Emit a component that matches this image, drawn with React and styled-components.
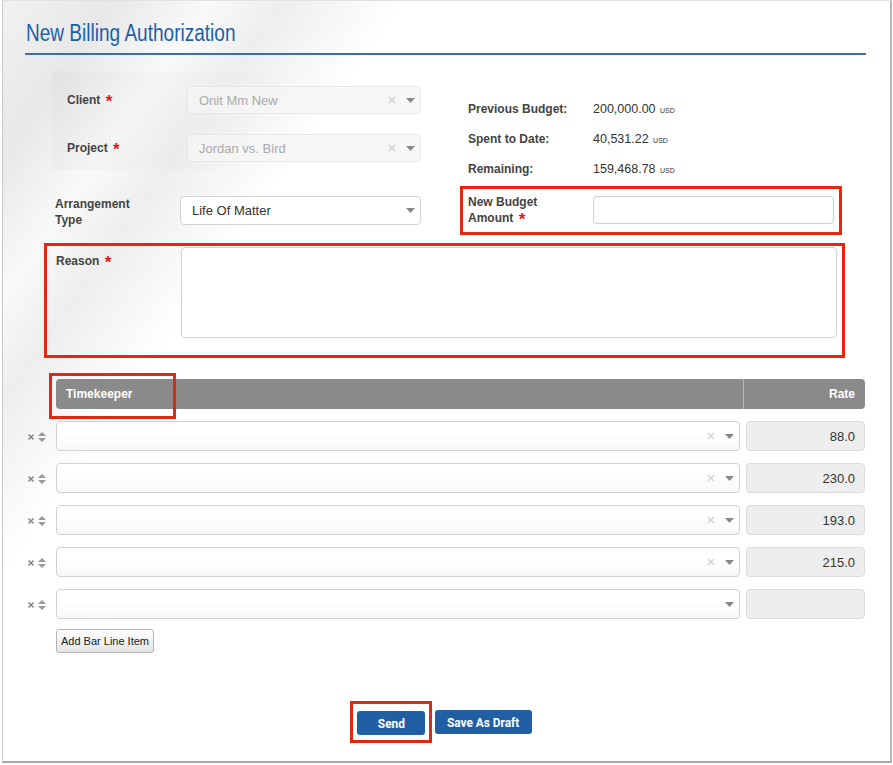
import React from "react";
import styled, { createGlobalStyle } from "styled-components";

const GlobalStyle = createGlobalStyle`
  html, body {
    margin: 0;
    padding: 0;
    background: #fff;
    font-family: "Liberation Sans", Arial, sans-serif;
  }
`;

const budgetInfo = [
  { label: "Previous Budget:", value: "200,000.00" },
  { label: "Spent to Date:", value: "40,531.22" },
  { label: "Remaining:", value: "159,468.78" },
];

const timekeepers = [
  { rate: "88.0", clearable: true },
  { rate: "230.0", clearable: true },
  { rate: "193.0", clearable: true },
  { rate: "215.0", clearable: true },
  { rate: "", clearable: false },
];

const Caret = () => (
  <svg width="9" height="5" viewBox="0 0 9 5">
    <path d="M0 0 L9 0 L4.5 5 Z" fill="#888" />
  </svg>
);

const Clear = () => (
  <svg width="8" height="8" viewBox="0 0 8 8">
    <path d="M1 1 L7 7 M7 1 L1 7" stroke="#d0d0d0" strokeWidth="1.3" />
  </svg>
);

const RowTools = () => (
  <svg width="22" height="12" viewBox="0 0 22 12">
    <path d="M1.5 3.5 L6.5 8.5 M6.5 3.5 L1.5 8.5" stroke="#888" strokeWidth="1.6" />
    <path d="M11 5 L15 1 L19 5 Z" fill="#999" />
    <path d="M11 7 L15 11 L19 7 Z" fill="#999" />
  </svg>
);

export default function App() {
  return (
    <>
      <GlobalStyle />
      <Frame>
        <TitleBar>
          <TitleText>New Billing Authorization</TitleText>
        </TitleBar>

        <TopGrid>
          <div>
            <ShadedPanel>
              <FieldRow>
                <Label width="120px">
                  Client <Req>*</Req>
                </Label>
                <Select disabled>
                  <span>Onit Mm New</span>
                  <SelectIcons>
                    <Clear />
                    <Caret />
                  </SelectIcons>
                </Select>
              </FieldRow>
              <FieldRow>
                <Label width="120px">
                  Project <Req>*</Req>
                </Label>
                <Select disabled>
                  <span>Jordan vs. Bird</span>
                  <SelectIcons>
                    <Clear />
                    <Caret />
                  </SelectIcons>
                </Select>
              </FieldRow>
            </ShadedPanel>
            <ArrangementRow>
              <Label width="125px">
                Arrangement
                <br />
                Type
              </Label>
              <Select tall>
                <span>Life Of Matter</span>
                <SelectIcons>
                  <Caret />
                </SelectIcons>
              </Select>
            </ArrangementRow>
          </div>

          <RightCol>
            {budgetInfo.map((b) => (
              <InfoRow key={b.label}>
                <Label width="125px">{b.label}</Label>
                <Amount>
                  {b.value} <Currency>USD</Currency>
                </Amount>
              </InfoRow>
            ))}
            <Highlight>
              <BudgetRow>
                <Label width="125px">
                  New Budget
                  <br />
                  Amount <Req>*</Req>
                </Label>
                <TextInput />
              </BudgetRow>
            </Highlight>
          </RightCol>
        </TopGrid>

        <ReasonBox>
          <Label width="125px">
            Reason <Req>*</Req>
          </Label>
          <TextArea />
        </ReasonBox>

        <Table>
          <HeaderRow>
            <HeadCell>
              Timekeeper
              <Marker />
            </HeadCell>
            <HeadCell align="right">Rate</HeadCell>
          </HeaderRow>
          {timekeepers.map((t, i) => (
            <LineRow key={i}>
              <Tools>
                <RowTools />
              </Tools>
              <Select grow>
                <span />
                <SelectIcons>
                  {t.clearable && <Clear />}
                  <Caret />
                </SelectIcons>
              </Select>
              <RateInput>{t.rate}</RateInput>
            </LineRow>
          ))}
          <AddButton>Add Bar Line Item</AddButton>
        </Table>

        <Actions>
          <SendMark>
            <PrimaryButton>
              <ButtonText>Send</ButtonText>
            </PrimaryButton>
          </SendMark>
          <PrimaryButton wide>
            <ButtonText>Save As Draft</ButtonText>
          </PrimaryButton>
        </Actions>
      </Frame>
    </>
  );
}

const Frame = styled.div`
  box-sizing: border-box;
  margin-left: 2px;
  width: 890px;
  height: 763px;
  border: 1px solid #e2e2e2;
  border-left-color: #c8c8c8;
  border-right: 2px solid #b5b5b5;
  border-bottom: 2px solid #a8a8a8;
  background: linear-gradient(
    125deg,
    #f1f1f1 0px,
    #e8e8e8 90px,
    #f9f9f9 170px,
    #eeeeee 230px,
    #ffffff 330px
  );
  padding-top: 16px;
`;

const TitleBar = styled.div`
  margin: 0 24px 0 22px;
  padding: 0 0 6px 1px;
  border-bottom: 2px solid #3570b5;
  height: 30px;
  white-space: nowrap;
`;

const TitleText = styled.h1`
  display: inline-block;
  margin: 0;
  transform: scaleX(0.81);
  transform-origin: left center;
  font-family: "Liberation Sans", Arial, sans-serif;
  font-weight: normal;
  font-size: 23.5px;
  line-height: 32px;
  color: #1f5fa9;
`;

const TopGrid = styled.div`
  display: grid;
  grid-template-columns: 396px 384px;
  column-gap: 20px;
  padding-left: 41px;
  margin-top: 16px;
`;

const ShadedPanel = styled.div`
  margin-left: 8px;
  padding: 15px 0 8px 15px;
  display: flex;
  flex-direction: column;
  gap: 20px;
  background: linear-gradient(110deg, rgba(0, 0, 0, 0.025), rgba(0, 0, 0, 0) 70%);
`;

const FieldRow = styled.div`
  display: flex;
  align-items: center;
`;

const ArrangementRow = styled.div`
  display: flex;
  align-items: center;
  margin: 23px 0 0 11px;

  ${() => Label} {
    padding-top: 3px;
  }
`;

const Label = styled.div`
  width: ${(p) => p.width};
  flex-shrink: 0;
  font-size: 12px;
  font-weight: bold;
  line-height: 16px;
  color: #444;
  padding-right: 10px;
  box-sizing: border-box;
`;

const Req = styled.span`
  color: #e01818;
  font-size: 17px;
  line-height: 12px;
  vertical-align: -3px;
  margin-left: 2px;
`;

const Select = styled.div`
  box-sizing: border-box;
  width: ${(p) => (p.grow ? "auto" : p.tall ? "241px" : "234px")};
  flex: ${(p) => (p.grow ? "1" : "none")};
  height: ${(p) => (p.tall ? "29px" : p.grow ? "30px" : "28px")};
  display: flex;
  align-items: center;
  justify-content: space-between;
  padding: 0 5px 0 11px;
  border: 1px solid ${(p) => (p.disabled ? "#e8e8e8" : "#d2d2d2")};
  border-radius: 4px;
  background: ${(p) =>
    p.disabled
      ? "rgba(245,245,245,0.8)"
      : p.grow
      ? "linear-gradient(#fff 0%, #fff 40%, #f8f8f8 100%)"
      : "#fff"};
  font-size: 13px;
  color: ${(p) => (p.disabled ? "#aaa" : "#333")};
`;

const SelectIcons = styled.span`
  display: flex;
  align-items: center;
  gap: 10px;
`;

const RightCol = styled.div`
  padding-top: 23px;
`;

const InfoRow = styled.div`
  display: flex;
  align-items: center;
  height: 30px;
  padding-left: 8px;
`;

const Amount = styled.div`
  font-size: 12.5px;
  color: #333;
`;

const Currency = styled.span`
  font-size: 7px;
  text-transform: uppercase;
  margin-left: 1px;
`;

const Highlight = styled.div`
  margin-top: 2px;
  border: 3px solid #e2280f;
  padding: 7px 5px 8px 5px;
  width: 382px;
  box-sizing: border-box;
`;

const BudgetRow = styled.div`
  display: flex;
  align-items: center;
  height: 28px;
`;

const TextInput = styled.div`
  box-sizing: border-box;
  width: 242px;
  height: 28px;
  border: 1px solid #cfcfcf;
  border-radius: 4px;
  background: #fff;
`;

const ReasonBox = styled.div`
  box-sizing: border-box;
  margin: 8px 0 0 41px;
  width: 801px;
  display: flex;
  align-items: flex-start;
  border: 3px solid #e2280f;
  padding: 1px 5px 17px 9px;

  ${Label} {
    padding-top: 6px;
  }
`;

const TextArea = styled.div`
  box-sizing: border-box;
  flex: 1;
  height: 91px;
  border: 1px solid #d2d2d2;
  border-radius: 4px;
  background: #fff;
`;

const Table = styled.div`
  margin: 21px 25px 0 21px;
  display: flex;
  flex-direction: column;
  gap: 12px;
`;

const HeaderRow = styled.div`
  margin-left: 32px;
  height: 30px;
  display: grid;
  grid-template-columns: 1fr 122px;
  border-radius: 4px;
  background: #8a8a8a;
`;

const HeadCell = styled.div`
  position: relative;
  display: flex;
  align-items: center;
  justify-content: ${(p) => (p.align === "right" ? "flex-end" : "flex-start")};
  padding: 0 10px;
  font-size: 12px;
  font-weight: bold;
  color: #fff;
  & + & {
    border-left: 1px solid #b8b8b8;
  }
`;

const Marker = styled.span`
  position: absolute;
  left: -7px;
  top: -6px;
  width: 127px;
  height: 46px;
  box-sizing: border-box;
  border: 3px solid #e2280f;
`;

const LineRow = styled.div`
  display: flex;
  align-items: center;
  gap: 6px;
`;

const Tools = styled.div`
  box-sizing: border-box;
  width: 26px;
  padding: 2px 0 0 3px;
  display: flex;
  align-items: center;
`;

const RateInput = styled.div`
  box-sizing: border-box;
  width: 119px;
  height: 30px;
  border: 1px solid #dcdcdc;
  border-radius: 4px;
  background: #eeeeee;
  display: flex;
  align-items: center;
  justify-content: flex-end;
  padding-right: 9px;
  font-size: 13px;
  color: #333;
`;

const AddButton = styled.button`
  align-self: flex-start;
  margin: -2px 0 0 32px;
  height: 24px;
  width: 98px;
  padding: 0;
  border: 1px solid #b5b5b5;
  border-radius: 3px;
  background: linear-gradient(#ffffff, #e4e4e4);
  font-family: "Liberation Sans", Arial, sans-serif;
  font-size: 11px;
  color: #222;
`;

const Actions = styled.div`
  margin-top: 48px;
  display: flex;
  align-items: center;
  padding-left: 347px;
  gap: 3px;
`;

const SendMark = styled.div`
  border: 3px solid #e2280f;
  padding: 7px 4px 5px 4px;
`;

const PrimaryButton = styled.button`
  width: ${(p) => (p.wide ? "97px" : "68px")};
  height: 24px;
  padding: 0;
  border: none;
  border-radius: 3px;
  background: #215fa5;
  color: #fff;
  font-family: "Roboto", "Liberation Sans", sans-serif;
  font-weight: bold;
  font-size: 13.5px;
  white-space: nowrap;
`;

const ButtonText = styled.span`
  display: inline-block;
  transform: scaleX(0.88);
`;
